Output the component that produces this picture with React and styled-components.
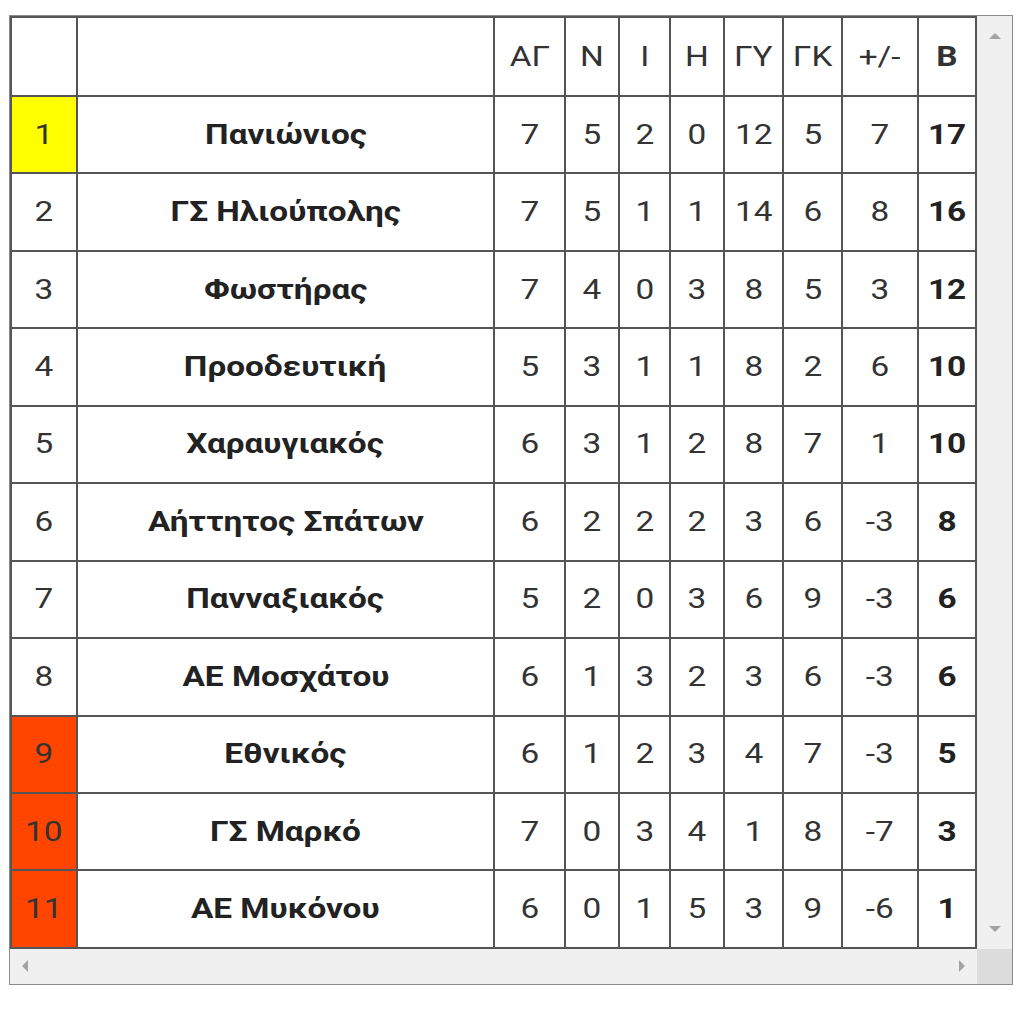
import React from 'react';
import styled, { createGlobalStyle } from 'styled-components';

const rows = [
    [1, 'Πανιώνιος', 7, 5, 2, 0, 12, 5, 7, 17],
    [2, 'ΓΣ Ηλιούπολης', 7, 5, 1, 1, 14, 6, 8, 16],
    [3, 'Φωστήρας', 7, 4, 0, 3, 8, 5, 3, 12],
    [4, 'Προοδευτική', 5, 3, 1, 1, 8, 2, 6, 10],
    [5, 'Χαραυγιακός', 6, 3, 1, 2, 8, 7, 1, 10],
    [6, 'Αήττητος Σπάτων', 6, 2, 2, 2, 3, 6, -3, 8],
    [7, 'Πανναξιακός', 5, 2, 0, 3, 6, 9, -3, 6],
    [8, 'ΑΕ Μοσχάτου', 6, 1, 3, 2, 3, 6, -3, 6],
    [9, 'Εθνικός', 6, 1, 2, 3, 4, 7, -3, 5],
    [10, 'ΓΣ Μαρκό', 7, 0, 3, 4, 1, 8, -7, 3],
    [11, 'ΑΕ Μυκόνου', 6, 0, 1, 5, 3, 9, -6, 1],
];

const headers = ['ΑΓ', 'Ν', 'Ι', 'Η', 'ΓΥ', 'ΓΚ', '+/-'];
const widths = [66, 417, 71, 54, 51, 54, 59, 59, 76, 58];

// θέση -> χρώμα ζώνης
const zoneOf = (pos) => {
    if (pos === 1) return 'top';
    if (pos >= 9) return 'drop';
    return null;
};

const App = () => {
    return (
        <>
            <GlobalStyle />
            <Frame>
                <TableArea>
                    <Table>
                        <colgroup>
                            {widths.map((w, i) => (
                                <col key={i} style={{ width: w }} />
                            ))}
                        </colgroup>
                        <thead>
                            <HeadRow>
                                <Cell />
                                <Cell />
                                {headers.map((h) => (
                                    <Cell key={h}>
                                        <Text>{h}</Text>
                                    </Cell>
                                ))}
                                <Cell $bold>
                                    <Text>Β</Text>
                                </Cell>
                            </HeadRow>
                        </thead>
                        <tbody>
                            {rows.map(([pos, team, ...stats]) => (
                                <BodyRow key={pos}>
                                    <Cell $zone={zoneOf(pos)}>
                                        <Text>{pos}</Text>
                                    </Cell>
                                    <Cell $bold $dark>
                                        <Text>{team}</Text>
                                    </Cell>
                                    {stats.slice(0, 7).map((v, i) => (
                                        <Cell key={i}>
                                            <Text>{v}</Text>
                                        </Cell>
                                    ))}
                                    <Cell $bold $dark>
                                        <Text>{stats[7]}</Text>
                                    </Cell>
                                </BodyRow>
                            ))}
                        </tbody>
                    </Table>
                </TableArea>

                <VScroll>
                    <Arrow $dir='up' />
                    <Arrow $dir='down' />
                </VScroll>
                <HScroll>
                    <Arrow $dir='left' />
                    <Arrow $dir='right' />
                </HScroll>
                <Corner />
            </Frame>
        </>
    );
};

export default App;

/* στυλ */
const GlobalStyle = createGlobalStyle`
    html, body {
        margin: 0;
        background: #ffffff;
    }
    body {
        padding: 15px 0 0 9px;
        font-family: Roboto, "Noto Sans", "DejaVu Sans", sans-serif;
    }
`;

const Frame = styled.div`
    display: grid;
    grid-template-columns: auto 35px;
    grid-template-rows: auto 35px;
    width: fit-content;
    border: 1px solid #8c8c8c;
    background: #f0f0f0;
`;

const TableArea = styled.div`
    background: #ffffff;
`;

const Table = styled.table`
    border-collapse: collapse;
    table-layout: fixed;
    width: 966px;
`;

const HeadRow = styled.tr`
    height: 79px;
`;

const BodyRow = styled.tr`
    height: 77.45px;
`;

const zoneColors = {
    top: '#ffff00',
    drop: '#ff4500',
};

const Cell = styled.td`
    border: 2px solid #555555;
    padding: 0;
    text-align: center;
    vertical-align: middle;
    font-size: 28px;
    line-height: 1;
    font-weight: ${(p) => (p.$bold ? 700 : 400)};
    color: ${(p) => (p.$dark ? '#222222' : '#333333')};
    background: ${(p) => (p.$zone ? zoneColors[p.$zone] : '#ffffff')};
    white-space: nowrap;
`;

// η αρχική εικόνα είναι τεντωμένη οριζόντια
const Text = styled.span`
    display: inline-block;
    transform: scaleX(1.19);
`;

const VScroll = styled.div`
    display: flex;
    flex-direction: column;
    justify-content: space-between;
    align-items: center;
    padding: 17px 0;
    background: #f0f0f0;
`;

const HScroll = styled.div`
    display: flex;
    justify-content: space-between;
    align-items: center;
    padding: 0 12px;
    background: #f0f0f0;
`;

const Corner = styled.div`
    background: #dcdcdc;
`;

const arrowShapes = {
    up: 'border-left: 6px solid transparent; border-right: 6px solid transparent; border-bottom: 6px solid #a3a3a3;',
    down: 'border-left: 6px solid transparent; border-right: 6px solid transparent; border-top: 6px solid #a3a3a3;',
    left: 'border-top: 6px solid transparent; border-bottom: 6px solid transparent; border-right: 6px solid #a3a3a3;',
    right: 'border-top: 6px solid transparent; border-bottom: 6px solid transparent; border-left: 6px solid #a3a3a3;',
};

const Arrow = styled.span`
    width: 0;
    height: 0;
    ${(p) => arrowShapes[p.$dir]}
`;
